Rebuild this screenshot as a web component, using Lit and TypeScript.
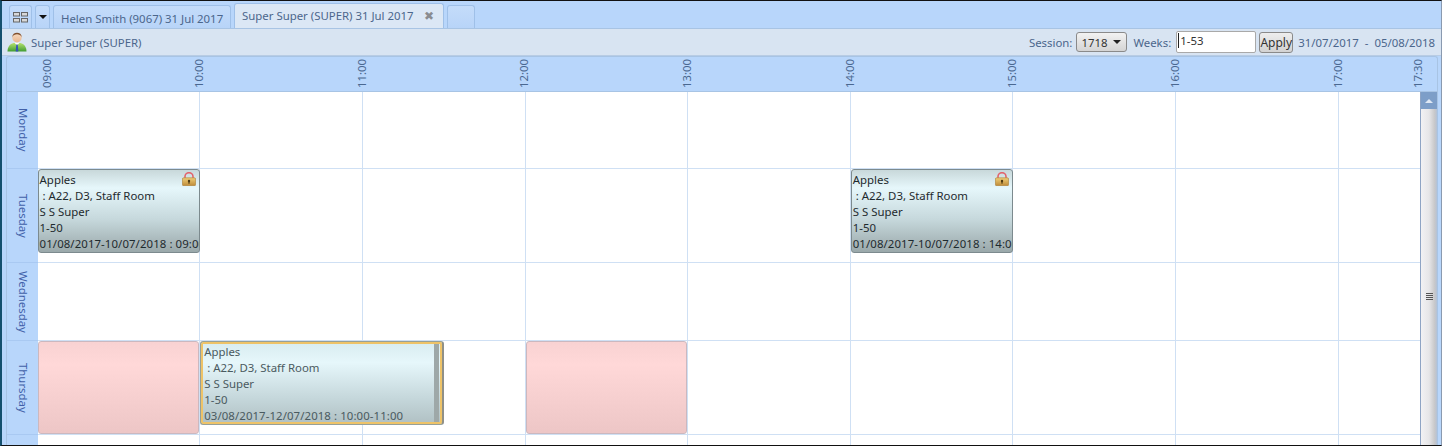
import { LitElement, html, css } from "lit";
import { customElement } from "lit/decorators.js";

const lock = html`<svg class="lock" viewBox="0 0 14 14" width="14" height="14">
  <defs><linearGradient id="lk" x1="0" y1="0" x2="0" y2="1"><stop offset="0" stop-color="#f0cf78"/><stop offset="1" stop-color="#bd8a38"/></linearGradient></defs>
  <path d="M3 7V4.400a4 3.700 0 0 1 8 0V7" fill="none" stroke="#e2636c" stroke-width="1.600"/>
  <rect x=".4" y="5.800" width="13.200" height="8" rx="1.300" fill="url(#lk)" stroke="#a87a30" stroke-width=".6"/>
  <circle cx="7" cy="9" r="1.200" fill="#4e3a12"/><rect x="6.400" y="9.300" width="1.200" height="2.400" fill="#4e3a12"/>
</svg>`;

const person = html`<svg class="person" viewBox="0 0 20 20" width="20" height="20">
  <defs><linearGradient id="sh" x1="0" y1="0" x2="0" y2="1"><stop offset="0" stop-color="#b4e070"/><stop offset="1" stop-color="#3f9c30"/></linearGradient>
  <linearGradient id="fc" x1="0" y1="0" x2="0" y2="1"><stop offset="0" stop-color="#f8dcc0"/><stop offset="1" stop-color="#e8b48e"/></linearGradient></defs>
  <path d="M0.500 19.600c0-5 2.500-7.600 6-8.600h7c3.500 1 6 3.600 6 8.600z" fill="url(#sh)"/>
  <path d="M7.500 10.800h5L10 13.400z" fill="#fff"/>
  <path d="M9.300 12.600h1.400l.6 7h-2.600z" fill="#3553b8"/>
  <circle cx="10" cy="5.800" r="4.700" fill="url(#fc)"/>
  <path d="M5.200 5.400C5.400 2.200 7.500 .8 10 .8s4.600 1.400 4.800 4.600C13.800 3 12 2.300 10 2.300S6.200 3 5.200 5.400z" fill="#80502e"/>
</svg>`;

interface Ev { start: number; span: number; kind: "class" | "selected" | "blocked"; lines?: string[]; locked?: boolean }
interface Day { name: string; height: number; events: Ev[] }

const tue = (t: string) => ["Apples", " : A22, D3, Staff Room", "S S Super", "1-50", `01/08/2017-10/07/2018 : ${t}`];

const DAYS: Day[] = [
  { name: "Monday", height: 77, events: [] },
  { name: "Tuesday", height: 94, events: [
    { start: 1, span: 2, kind: "class", lines: tue("09:00-10:00"), locked: true },
    { start: 11, span: 2, kind: "class", lines: tue("14:00-15:00"), locked: true },
  ] },
  { name: "Wednesday", height: 78, events: [] },
  { name: "Thursday", height: 94, events: [
    { start: 1, span: 2, kind: "blocked" },
    { start: 3, span: 3, kind: "selected", lines: ["Apples", " : A22, D3, Staff Room", "S S Super", "1-50", "03/08/2017-12/07/2018 : 10:00-11:00"] },
    { start: 7, span: 2, kind: "blocked" },
  ] },
  { name: "", height: 40, events: [] },
];

const TIMES = ["09:00", "10:00", "11:00", "12:00", "13:00", "14:00", "15:00", "16:00", "17:00", "17:30"];
const CELLS = [0, 1, 2, 3, 4, 5, 6, 7];

@customElement("app-root")
export class AppRoot extends LitElement {
  static styles = css`
    :host { display: block; height: 446px; overflow: hidden; }
    .frame {
      box-sizing: border-box; height: 446px; display: flex; flex-direction: column;
      border-top: 1px solid #111; border-bottom: 1px solid #111; border-left: 2px solid #14506e; border-right: 1px solid #8a9ab0;
      background: #b8d6fb; font-family: "Noto Sans", "Open Sans", sans-serif; font-size: 11.4px; color: #4b668c; overflow: hidden;
    }
    .tabs { height: 27px; flex: none; display: flex; align-items: flex-end; gap: 3px; padding-left: 7px; box-sizing: border-box; }
    .tab {
      box-sizing: border-box; height: 23px; border: 1px solid #9fc0e8; border-bottom: none; border-radius: 3px 3px 0 0;
      background: linear-gradient(#c4dcfa, #b8d4f8); display: flex; align-items: center; padding: 0 7px; white-space: nowrap;
    }
    .tab.icon { width: 23px; padding: 0; justify-content: center; }
    .tab.arrow { width: 15px; padding: 0; justify-content: center; }
    .tab.name { width: 178px; padding-top: 2px; }
    .tab.active { width: 210px; height: 25px; background: #dbe7f5; padding: 0 9px 1px 7px; justify-content: space-between; }
    .tab.blank { width: 28px; }
    .close { color: #8a8c90; font-size: 12px; line-height: 1; font-family: "DejaVu Sans", sans-serif; }
    .tri { width: 0; height: 0; border: 4px solid transparent; border-top: 4px solid #111; border-bottom: 0; }
    .toolbar {
      height: 28px; flex: none; box-sizing: border-box; background: #d8e4f2; border-top: 1px solid #a8c4e4; border-bottom: 1px solid #b8cce4;
      display: flex; align-items: center; padding: 0 6px 0 5px; white-space: nowrap;
    }
    .person { margin-right: 4px; }
    .spacer { flex: 1; }
    .select {
      box-sizing: border-box; width: 51px; height: 20px; border: 1px solid #8a8a8a; border-radius: 3px; margin: 0 6px 0 4px;
      background: linear-gradient(#f2f2f2, #d4d4d4); color: #333; display: flex; align-items: center; justify-content: space-between; padding: 0 5px 0 4px;
    }
    .select .tri { border-top-color: #222; }
    .input {
      box-sizing: border-box; width: 80px; height: 22px; border: 1px solid #a9a9a9; border-radius: 2px; background: #fff; color: #333;
      margin-left: 5px; padding: 0 0 3px 1px; display: flex; align-items: center;
    }
    .caret { width: 1px; height: 15px; background: #222; margin-right: 1px; }
    .apply {
      box-sizing: border-box; width: 34px; height: 21px; border: 1px solid #8a8a8a; border-radius: 3px; background: linear-gradient(#eeeeee, #d2d2d2);
      color: #333; font-size: 12px; display: flex; align-items: center; justify-content: center; margin-left: 3px;
    }
    .dates { margin-left: 5px; word-spacing: 3px; }
    .panel {
      flex: 1; min-height: 0; margin: 0 3px 0 4px; border: 1px solid #a8c4e4; border-bottom: none; border-radius: 3px 3px 0 0;
      background: #b8d6fb; display: flex; flex-direction: column; overflow: hidden;
    }
    .head {
      height: 35px; flex: none; box-sizing: border-box; display: grid; border-bottom: 1px solid #a8c4e4;
      grid-template-columns: 152px repeat(7, 162.7px) 80px 20px; padding-left: 33px; padding-top: 3px;
    }
    .time { writing-mode: vertical-rl; transform: rotate(180deg); width: 14px; height: 28px; line-height: 14px; text-align: left; color: #4a6890; }
    .body { flex: 1; min-height: 0; display: flex; }
    .rows { flex: 1; min-width: 0; }
    .row { display: flex; box-sizing: border-box; border-bottom: 1px solid #cfe0f4; }
    .day {
      width: 30.6px; flex: none; box-sizing: border-box; padding-left: 3px; writing-mode: vertical-rl; display: flex; align-items: center; justify-content: center;
      background: #b8d6fb; color: #4060a8; box-shadow: 0 1px 0 #a9c9f2;
    }
    .slots { flex: 1; min-width: 0; display: grid; grid-template-columns: repeat(17, minmax(0, 1fr)); grid-template-rows: 1fr; background: #fff; }
    .cell { grid-row: 1; border-right: 1px solid #cfe0f4; }
    .ev { grid-row: 1; box-sizing: border-box; border-radius: 3px; overflow: hidden; position: relative; z-index: 1; min-width: 0; }
    .ev.class {
      align-self: start; height: 84px; border: 1px solid #7c8a8e; color: #1e2a2e; padding: 2px 0 0 1px; line-height: 16px;
      background: linear-gradient(#c8d8da 0%, #e6f7fb 22%, #c6d8dc 60%, #9aa8aa 100%);
    }
    .ev.blocked { border: 1px solid #cbb8bf; margin-right: 1px; background: linear-gradient(#f9d2d2 0%, #ffd8d8 25%, #edc6c6 100%); }
    .ev.selected {
      align-self: start; height: 84px; border: 1px solid #97a098; border-right: 2px solid #8f9088; color: #4a5a60; line-height: 16px; padding: 2px 3px 2px 3px;
      box-shadow: inset 0 0 0 2px #eec368;
      background: linear-gradient(#d8ecf0 0%, #e6f7fb 25%, #c4d6da 70%, #b0c0c3 100%);
      display: flex;
    }
    .ev .text { flex: 1; min-width: 0; }
    .grip { width: 5px; flex: none; background: #9ea8a8; }
    .line { white-space: pre; }
    .line:last-child { letter-spacing: .09px; }
    .lock { position: absolute; top: 2px; right: 3px; }
    .scroll { width: 17px; flex: none; box-sizing: border-box; background: linear-gradient(90deg, #f2f2f4, #e6e6e8 50%, #c8c8ca 85%, #b4c2d6); border-left: 1px solid #8ea4c4; display: flex; flex-direction: column; align-items: center; }
    .sbtn { width: 100%; height: 17px; flex: none; background: #7d9ec8; display: flex; align-items: center; justify-content: center; }
    .up { width: 0; height: 0; border: 4px solid transparent; border-bottom: 4px solid #dfe8f4; border-top: 0; }
    .grips { margin-top: 184px; display: flex; flex-direction: column; gap: 1px; }
    .grips i { display: block; width: 7px; height: 1px; background: #555; }
  `;

  private renderEvent(e: Ev) {
    const pos = `grid-column: ${e.start} / span ${e.span}`;
    const text = html`<div class="text">${(e.lines ?? []).map((l) => html`<div class="line">${l}</div>`)}</div>`;
    return html`<div class="ev ${e.kind}" style=${pos}>
      ${e.lines ? text : ""}${e.kind === "selected" ? html`<div class="grip"></div>` : ""}${e.locked ? lock : ""}
    </div>`;
  }

  render() {
    return html`<div class="frame">
      <div class="tabs">
        <div class="tab icon"><svg width="15" height="11" viewBox="0 0 15 11"><g fill="#d8d8d8" stroke="#666"><rect x=".5" y=".5" width="6" height="3.500"/><rect x="8.500" y=".5" width="6" height="3.500"/><rect x=".5" y="6.500" width="6" height="3.500"/><rect x="8.500" y="6.500" width="6" height="3.500"/></g></svg></div>
        <div class="tab arrow"><span class="tri"></span></div>
        <div class="tab name">Helen Smith (9067) 31 Jul 2017</div>
        <div class="tab active"><span>Super Super (SUPER) 31 Jul 2017</span><span class="close">✖</span></div>
        <div class="tab blank"></div>
      </div>
      <div class="toolbar">
        ${person}<span>Super Super (SUPER)</span>
        <span class="spacer"></span>
        <span>Session:</span>
        <div class="select">1718<span class="tri"></span></div>
        <span>Weeks:</span>
        <div class="input"><span class="caret"></span>1-53</div>
        <div class="apply">Apply</div>
        <span class="dates">31/07/2017 - 05/08/2018</span>
      </div>
      <div class="panel">
        <div class="head">${TIMES.map((t) => html`<div class="time">${t}</div>`)}</div>
        <div class="body">
          <div class="rows">
            ${DAYS.map((d) => html`<div class="row" style="height:${d.height}px">
              <div class="day">${d.name}</div>
              <div class="slots">
                ${CELLS.map((i) => html`<div class="cell" style="grid-column: ${2 * i + 1} / span 2"></div>`)}
                ${d.events.map((e) => this.renderEvent(e))}
              </div>
            </div>`)}
          </div>
          <div class="scroll">
            <div class="sbtn"><span class="up"></span></div>
            <div class="grips"><i></i><i></i><i></i><i></i></div>
          </div>
        </div>
      </div>
    </div>`;
  }
}
